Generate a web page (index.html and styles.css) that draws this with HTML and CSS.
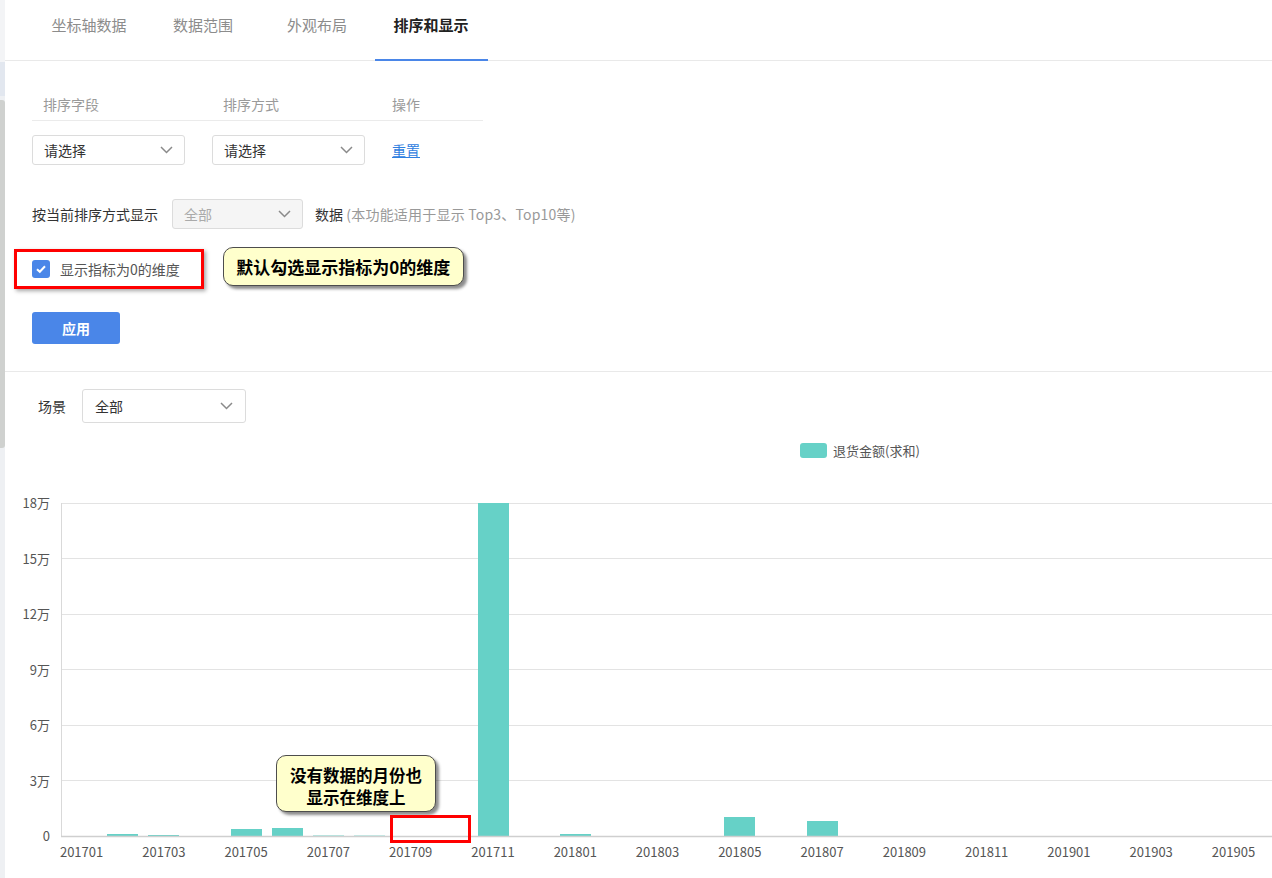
FILE: index.html
```html
<!DOCTYPE html>
<html lang="zh-CN">
<head>
<meta charset="utf-8">
<title>排序和显示</title>
<link rel="stylesheet" href="styles.css">
</head>
<body>
<div class="app">
  <div class="rail">
    <div class="rail-top"></div>
    <div class="rail-sel"></div>
    <div class="rail-thumb"></div>
  </div>
  <main class="main">
    <nav class="tabs">
      <div class="tab">坐标轴数据</div>
      <div class="tab">数据范围</div>
      <div class="tab">外观布局</div>
      <div class="tab active">排序和显示</div>
    </nav>

    <section class="config">
      <div class="sort-head">
        <div class="pad">排序字段</div>
        <div class="pad">排序方式</div>
        <div>操作</div>
      </div>
      <div class="sort-row">
        <div class="select"><span>请选择</span><svg class="chev" width="13" height="8" viewBox="0 0 13 8"><path d="M1 1l5.5 5.5L12 1" fill="none" stroke="#8a8a8a" stroke-width="1.5"/></svg></div>
        <div class="select"><span>请选择</span><svg class="chev" width="13" height="8" viewBox="0 0 13 8"><path d="M1 1l5.5 5.5L12 1" fill="none" stroke="#8a8a8a" stroke-width="1.5"/></svg></div>
        <a class="link">重置</a>
      </div>

      <div class="show-row">
        <span class="show-label">按当前排序方式显示</span>
        <div class="select disabled"><span>全部</span><svg class="chev" width="13" height="8" viewBox="0 0 13 8"><path d="M1 1l5.5 5.5L12 1" fill="none" stroke="#8a8a8a" stroke-width="1.5"/></svg></div>
        <span>数据</span>
        <span class="hint">&nbsp;(本功能适用于显示 Top3、Top10等)</span>
      </div>

      <div class="check-row">
        <div class="redbox">
          <span class="checkbox"><svg width="12" height="10" viewBox="0 0 12 10"><path d="M2 5.2l2.8 2.6L10 2.2" fill="none" stroke="#fff" stroke-width="2"/></svg></span>
          <span class="check-label">显示指标为0的维度</span>
        </div>
        <div class="callout callout-1">默认勾选显示指标为0的维度</div>
      </div>

      <button class="apply">应用</button>
    </section>

    <section class="chart-section">
      <div class="scene-row">
        <span>场景</span>
        <div class="select scene"><span>全部</span><svg class="chev" width="13" height="8" viewBox="0 0 13 8"><path d="M1 1l5.5 5.5L12 1" fill="none" stroke="#8a8a8a" stroke-width="1.5"/></svg></div>
      </div>
      <div class="legend"><span class="swatch"></span><span>退货金额(求和)</span></div>

      <svg class="chart" width="1267" height="418" viewBox="0 0 1267 418">
        <g stroke="#e3e3e3" stroke-width="1" shape-rendering="crispEdges">
          <line x1="56" y1="43.5" x2="1267" y2="43.5"/>
          <line x1="56" y1="98.5" x2="1267" y2="98.5"/>
          <line x1="56" y1="154.5" x2="1267" y2="154.5"/>
          <line x1="56" y1="209.5" x2="1267" y2="209.5"/>
          <line x1="56" y1="265.5" x2="1267" y2="265.5"/>
          <line x1="56" y1="320.5" x2="1267" y2="320.5"/>
        </g>
        <line x1="56.5" y1="43" x2="56.5" y2="376" stroke="#d9d9d9" shape-rendering="crispEdges"/>
        <g class="ylab" text-anchor="end">
          <text x="45" y="48">18万</text>
          <text x="45" y="103.5">15万</text>
          <text x="45" y="159">12万</text>
          <text x="45" y="214.5">9万</text>
          <text x="45" y="270">6万</text>
          <text x="45" y="325.5">3万</text>
          <text x="45" y="381">0</text>
        </g>
        <g fill="#66d1c7" shape-rendering="crispEdges">
          <rect x="102.2" y="373.5" width="31" height="2.5"/>
          <rect x="143.4" y="375" width="31" height="1"/>
          <rect x="225.6" y="369" width="31" height="7"/>
          <rect x="266.8" y="368" width="31" height="8"/>
          <rect x="307.9" y="375" width="31" height="1" opacity="0.5"/>
          <rect x="349.1" y="375" width="31" height="1" opacity="0.4"/>
          <rect x="472.5" y="43" width="31" height="333"/>
          <rect x="554.8" y="374" width="31" height="2"/>
          <rect x="719.3" y="357" width="31" height="19"/>
          <rect x="801.6" y="361" width="31" height="15"/>
        </g>
        <line x1="56" y1="376.5" x2="1267" y2="376.5" stroke="#cfcfcf" stroke-width="1.5"/>
        <g class="xlab" text-anchor="middle">
          <text x="76.6" y="397">201701</text>
          <text x="158.9" y="397">201703</text>
          <text x="241.1" y="397">201705</text>
          <text x="323.4" y="397">201707</text>
          <text x="405.7" y="397">201709</text>
          <text x="488" y="397">201711</text>
          <text x="570.3" y="397">201801</text>
          <text x="652.5" y="397">201803</text>
          <text x="734.8" y="397">201805</text>
          <text x="817.1" y="397">201807</text>
          <text x="899.4" y="397">201809</text>
          <text x="981.7" y="397">201811</text>
          <text x="1063.9" y="397">201901</text>
          <text x="1146.2" y="397">201903</text>
          <text x="1228.5" y="397">201905</text>
        </g>
      </svg>

      <div class="callout callout-2">
        <div class="cl-line">没有数据的月份也</div>
        <div class="cl-line">显示在维度上</div>
      </div>
      <div class="redmark"></div>
    </section>
  </main>
</div>
</body>
</html>
```

FILE: styles.css
```css
* { box-sizing: border-box; }

body {
  margin: 0;
  font-family: "Noto Sans CJK SC", "Noto Sans", sans-serif;
  font-size: 14px;
  color: #333;
  background: #fff;
}

.app {
  display: flex;
  width: 1272px;
  height: 878px;
  overflow: hidden;
}

.rail {
  width: 5px;
  flex: none;
  background: #eef0f3;
  display: flex;
  flex-direction: column;
}
.rail-top { height: 62px; background: #f3f4f6; }
.rail-sel { height: 34px; background: #e2e7ef; }
.rail-thumb {
  margin-top: 4px;
  height: 348px;
  background: #cfd1cf;
  border-radius: 0 3px 3px 0;
}

.main {
  flex: 1;
  min-width: 0;
}

/* tabs */
.tabs {
  display: flex;
  height: 61px;
  border-bottom: 1px solid #e9e9e9;
  padding-left: 27px;
}
.tab {
  width: 114px;
  text-align: center;
  padding-top: 14px;
  line-height: 22px;
  font-size: 15px;
  color: #8c8c8c;
  position: relative;
}
.tab.active {
  color: #222;
  font-weight: 700;
}
.tab.active::after {
  content: "";
  position: absolute;
  left: 1px;
  right: 0;
  bottom: -1px;
  height: 2px;
  background: #4a86e8;
}

/* config */
.config {
  padding: 27px 0 27px 27px;
  border-bottom: 1px solid #e9e9e9;
}
.sort-head {
  display: grid;
  grid-template-columns: 180px 180px 91px;
  width: 451px;
  height: 33px;
  border-bottom: 1px solid #ebebeb;
  color: #9a9a9a;
  line-height: 32px;
}
.sort-head .pad { padding-left: 11px; }

.sort-row {
  display: grid;
  grid-template-columns: 180px 180px 91px;
  margin-top: 14px;
  align-items: center;
}

.select {
  width: 153px;
  height: 30px;
  border: 1px solid #dcdcdc;
  border-radius: 3px;
  display: flex;
  align-items: center;
  justify-content: space-between;
  padding: 0 11px;
  color: #333;
  background: #fff;
}
.chev { flex: none; }

.link {
  color: #2f80e0;
  text-decoration: underline;
  cursor: pointer;
}

.show-row {
  display: flex;
  align-items: center;
  margin-top: 34px;
  height: 30px;
}
.show-label { width: 128px; }
.select.disabled {
  width: 131px;
  margin: 0 12px;
  background: #f5f5f5;
  color: #aaa;
}
.hint { color: #999; letter-spacing: 0.2px; }

.check-row {
  display: flex;
  align-items: flex-start;
  margin-top: 20px;
  margin-left: -18px;
}
.redbox {
  height: 40px;
  border: 3px solid #f00;
  padding: 0 21px 0 15px;
  display: flex;
  align-items: center;
  gap: 10px;
  box-shadow: 2px 2px 4px rgba(0, 0, 0, 0.35);
}
.checkbox {
  width: 18px;
  height: 18px;
  border-radius: 3px;
  background: #4a86e8;
  display: flex;
  align-items: center;
  justify-content: center;
}
.check-label { color: #555; }

.callout {
  background: #ffffcc;
  border: 1px solid #4d4d4d;
  border-radius: 10px;
  box-shadow: 3px 3px 3px rgba(0, 0, 0, 0.45);
  font-weight: 700;
  font-size: 17px;
  color: #000;
}
.callout-1 {
  margin-left: 19px;
  margin-top: -2px;
  width: 241px;
  height: 39px;
  display: flex;
  align-items: center;
  justify-content: center;
}

.apply {
  display: block;
  margin-top: 23px;
  width: 88px;
  height: 32px;
  background: #4a86e8;
  color: #fff;
  border: none;
  border-radius: 3px;
  font-family: inherit;
  font-size: 14px;
  font-weight: 700;
}

/* chart section */
.chart-section {
  position: relative;
  padding-top: 17px;
}
.scene-row {
  display: flex;
  align-items: center;
  padding-left: 33px;
  height: 34px;
}
.select.scene {
  width: 164px;
  height: 34px;
  margin-left: 16px;
  padding: 0 12px;
}

.legend {
  display: flex;
  align-items: center;
  gap: 6px;
  margin-top: 19px;
  padding-left: 795px;
  height: 16px;
  font-size: 13px;
  color: #555;
}
.swatch {
  width: 27px;
  height: 15px;
  border-radius: 3px;
  background: #66d1c7;
}

.chart {
  display: block;
  margin-top: 2px;
}
.chart text {
  font-family: "Noto Sans CJK SC", "Noto Sans", sans-serif;
  font-size: 13px;
  fill: #555;
}

.callout-2 {
  position: absolute;
  left: 271px;
  top: 383px;
  width: 160px;
  height: 57px;
  text-align: center;
  padding-top: 8px;
  font-size: 16.5px;
}
.cl-line {
  height: 22px;
  line-height: 22px;
  overflow: visible;
}
.redmark {
  position: absolute;
  left: 385px;
  top: 443px;
  width: 81px;
  height: 28px;
  border: 3px solid #f00;
}
```
